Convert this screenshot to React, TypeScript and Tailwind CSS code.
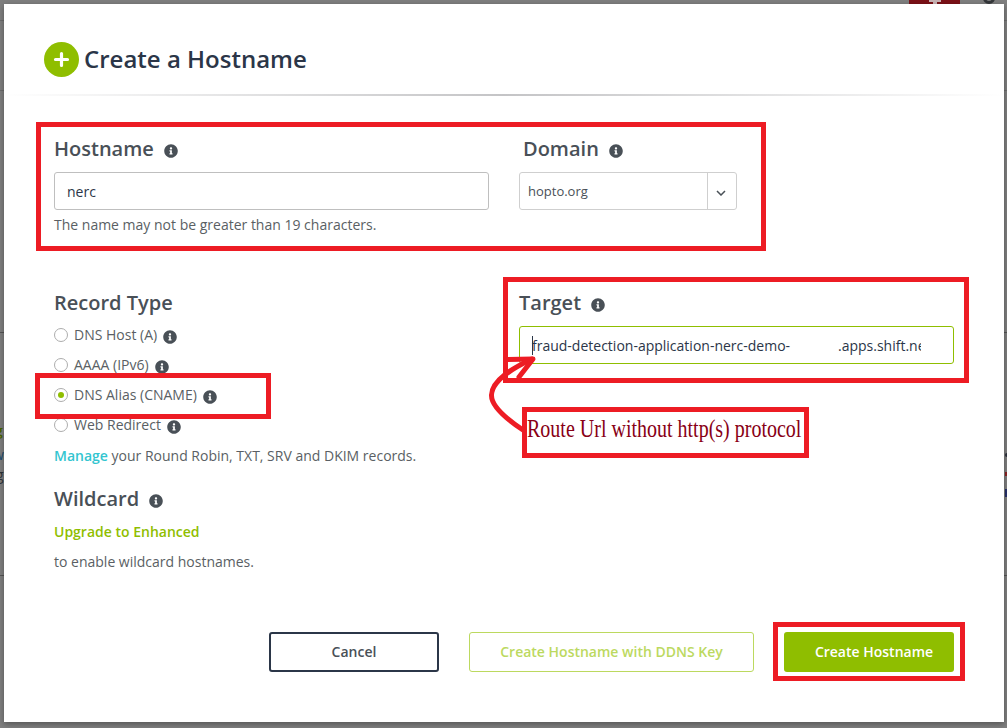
import React from "react";
import { FaInfoCircle } from "react-icons/fa";

function Info({ className = "" }: { className?: string }) {
  return <FaInfoCircle className={`size-[14px] shrink-0 text-[#495057] ${className}`} />;
}

function Heading({ children, info = true, className = "" }: { children: React.ReactNode; info?: boolean; className?: string }) {
  return (
    <div className={`flex h-[30px] items-center gap-[10px] text-[20px] font-semibold text-[#495057] ${className}`}>
      <span className="leading-[30px]">{children}</span>
      {info && <Info className="mt-[3px]" />}
    </div>
  );
}

function RadioRow({ label, checked = false }: { label: string; checked?: boolean }) {
  return (
    <div className="flex h-[30px] items-center">
      <span className="flex size-[14px] items-center justify-center rounded-full border border-[#adadad] bg-white">
        {checked && <span className="size-[6px] rounded-full bg-[#8fbe00]" />}
      </span>
      <span className="ml-[6px] leading-[30px]">{label}</span>
      <Info className="mt-[3px] ml-[6px]" />
    </div>
  );
}

function Frame({ className }: { className: string }) {
  return <div className={`pointer-events-none absolute border-[5px] border-[#ed1c24] ${className}`} />;
}

export default function App() {
  return (
    <div className="relative h-[728px] w-[1007px] overflow-hidden bg-[#7f7f7f] px-1 pt-1 font-['Open_Sans',sans-serif] text-[14px] text-[#5a5f64]">
      <div className="absolute top-0 left-[909px] h-1 w-[51px] bg-[#7b1116]">
        <span className="mx-auto block h-[2px] w-3 bg-[#c9b4b5]" />
        <span className="mx-auto block h-[2px] w-1 bg-[#c9b4b5]" />
      </div>
      <div className="absolute -top-2 left-[983px] size-3 rounded-full border-[3px] border-[#34373a]" />
      <div className="absolute top-[20px] left-0 h-px w-full bg-[#6c6c6c]" />
      <div className="absolute top-[90px] left-0 h-px w-full bg-[#6c6c6c]" />
      <div className="absolute top-[332px] left-0 h-px w-full bg-[#555]" />
      <div className="absolute top-[575px] left-0 h-px w-full bg-[#555]" />
      <div className="absolute top-[420px] -left-[5px] font-semibold text-[#4a6300]">g</div>
      <div className="absolute top-[444px] -left-[7px] text-[#204c70]">w</div>
      <div className="absolute top-[464px] -left-[4px] text-[#2e3338]">g</div>
      <div className="absolute top-[453px] left-[1005px] h-1 w-1 rounded-full bg-[#2b303b]" />
      <div className="absolute top-[472px] left-[1005px] h-1 w-1 bg-[#8d2323]" />
      <div className="absolute top-[489px] left-[1005px] h-2 w-1 bg-[#26306a]" />

      <main className="relative h-[718px] w-[1000px] bg-white shadow-[0_2px_6px_rgba(0,0,0,0.35)]">
        <header className="flex h-[90px] items-center pt-[21px] pl-10">
          <svg viewBox="0 0 35 35" className="size-[35px]">
            <circle cx="17.5" cy="17.5" r="17.5" fill="#8fbe00" />
            <path d="M17.5 11.5v12M11.5 17.5h12" stroke="white" strokeWidth="3.2" strokeLinecap="round" />
          </svg>
          <h1 className="-mt-[2px] ml-[5px] text-[24px] leading-[35px] font-semibold text-[#2b3648]">Create a Hostname</h1>
        </header>
        <div className="h-[2px] bg-linear-to-r from-white via-[#c4c4c6] to-white" />

        <div className="grid grid-cols-[435px_435px] gap-x-[30px] px-[50px] pt-[38px]">
          <section className="h-[154px]">
            <Heading>Hostname</Heading>
            <div className="mt-2 flex h-[38px] items-center rounded-[3px] border border-[#bfbfbf] px-3 text-[#2b3648]">nerc</div>
            <p className="mt-[5px] leading-[20px]">The name may not be greater than 19 characters.</p>
          </section>
          <section>
            <Heading className="ml-1">Domain</Heading>
            <div className="mt-2 flex h-[38px] w-[218px] items-center rounded-[3px] border border-[#cfcfcf] text-[13px] text-[#495057]">
              <span className="flex-1 pt-px pl-2">hopto.org</span>
              <span className="flex h-full w-[29px] items-center justify-center border-l border-[#cfcfcf]">
                <svg viewBox="0 0 10 6" className="mt-[3px] mr-[2px] h-[6px] w-[10px]" fill="none">
                  <path d="M1 1l4 4 4-4" stroke="#495057" strokeWidth="1.5" />
                </svg>
              </span>
            </div>
          </section>

          <section>
            <Heading info={false}>Record Type</Heading>
            <div className="mt-[2px]">
              <RadioRow label="DNS Host (A)" />
              <RadioRow label="AAAA (IPv6)" />
              <RadioRow label="DNS Alias (CNAME)" checked />
              <RadioRow label="Web Redirect" />
            </div>
            <p className="mt-[6px] leading-[20px]"><b className="font-semibold text-[#33c5d0]">Manage</b> your Round Robin, TXT, SRV and DKIM records.</p>
            <Heading className="mt-[18px]">Wildcard</Heading>
            <p className="mt-2 leading-[20px] font-semibold text-[#8fbe00]">Upgrade to Enhanced</p>
            <p className="mt-[10px] leading-[20px]">to enable wildcard hostnames.</p>
          </section>
          <section>
            <Heading>Target</Heading>
            <div className="mt-2 flex h-[38px] items-center rounded-[3px] border border-[#8fbe00] px-3 text-[#2b3648]">
              <span className="-mr-px h-[19px] w-px bg-[#2b3648]" />
              <span className="w-[306px] whitespace-nowrap">fraud-detection-application-nerc-demo-</span>
              <span className="w-[83px] overflow-hidden whitespace-nowrap">.apps.shift.nerc</span>
            </div>
          </section>
        </div>

        <footer className="flex gap-[30px] pt-[60px] pl-[265px] font-semibold">
          <button className="h-10 w-[170px] rounded-[3px] border-2 border-[#2b3648] pb-px text-[#495057]">Cancel</button>
          <button className="h-10 w-[285px] rounded-[3px] border border-[#bcd95f] pb-px text-[#bcd95f]">Create Hostname with DDNS Key</button>
          <button className="h-10 w-[170px] rounded-[3px] bg-[#8fbe00] pb-px pl-[10px] text-white">Create Hostname</button>
        </footer>
      </main>

      <Frame className="top-[122px] left-[36px] h-[129px] w-[730px]" />
      <Frame className="top-[277px] left-[503px] h-[106px] w-[466px]" />
      <Frame className="top-[373px] left-[35px] h-[46px] w-[236px]" />
      <Frame className="top-[622px] left-[773px] h-[59px] w-[192px]" />
      <div className="absolute top-[407px] left-[522px] h-[51px] w-[287px] border-[5px] border-[#ed1c24] bg-white">
        <span className="block w-max origin-left scale-x-[0.8] font-['Liberation_Serif',serif] text-[25px] leading-[34px] whitespace-nowrap text-[#880015]">Route Url without http(s) protocol</span>
      </div>
      <svg className="absolute top-[350px] left-[480px] h-[90px] w-[64px]" viewBox="480 350 64 90" fill="none" stroke="#ed1c24" strokeWidth="5" strokeLinecap="round" strokeLinejoin="round">
        <path d="M523 430C508 420 491 407 491.500 395C492 380 513 368 532 359" />
        <path d="M507 359.5L533 359L519 377" />
      </svg>
    </div>
  );
}
